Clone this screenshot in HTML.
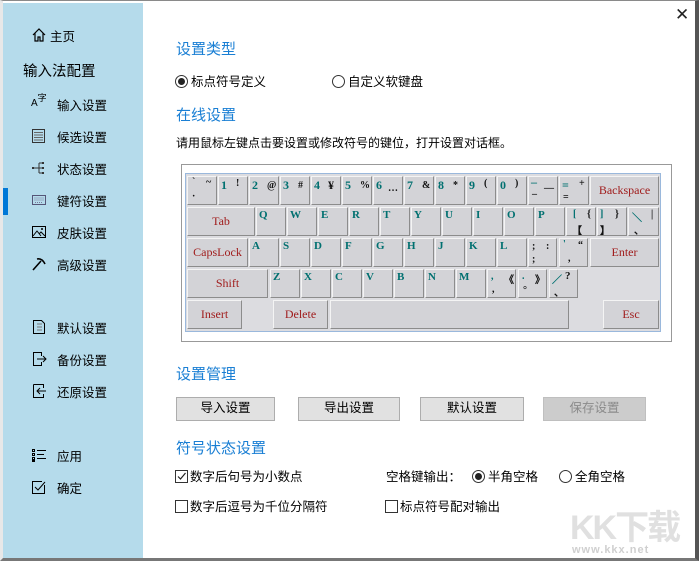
<!DOCTYPE html>
<html><head><meta charset="utf-8"><style>
*{margin:0;padding:0;box-sizing:border-box}
body{width:699px;height:561px;overflow:hidden;background:#fff;font-family:"Liberation Sans","Noto Sans CJK SC",sans-serif;font-size:12px;color:#000;position:relative}
.win{position:absolute;left:0;top:0;width:699px;height:561px;border:1px solid #8a8a8a;border-left:3px solid #e8e8e8;border-right:4px solid #555;border-bottom:3px solid #777}
.side{position:absolute;left:3px;top:3px;width:140px;height:555px;background:#b5dbeb}
.a{position:absolute;white-space:nowrap}
.si{position:absolute;left:57px;font-size:12.5px}
.ic{position:absolute;left:31px;width:16px;height:16px}
.h{position:absolute;left:176px;color:#1a7fd4;font-size:15px}
.btn{position:absolute;top:397px;height:24px;background:#e1e1e1;border:1px solid #adadad;text-align:center;line-height:21px;font-size:12.5px}
.rad{position:absolute;width:13px;height:13px;border:1px solid #333;border-radius:50%;background:#fff}
.rad.on::after{content:"";position:absolute;left:2px;top:2px;width:7px;height:7px;border-radius:50%;background:#222}
.cb{position:absolute;width:13px;height:13px;border:1px solid #333;background:#fff}
.kb{position:absolute;left:181px;top:164px;width:491px;height:178px;border:1px solid #999}
.kbi{position:absolute;left:185px;top:173px;width:476px;height:159px;border:1px solid #9ab8dc;background:#dcdce0}
.k{position:absolute;background:#d3d3d7;border:1px solid;border-color:#f4f4f4 #8c8c8c #8c8c8c #f4f4f4;font-family:"Liberation Serif",serif;font-size:10px;overflow:hidden}
.k b{position:absolute;color:#007070;font-weight:bold}
.k i{position:absolute;font-style:normal;color:#111;font-weight:bold}
.k.s{color:#a01c1c;text-align:center;font-size:12px}
</style></head><body>
<div class="win"></div>
<div class="side">
</div>
<!-- sidebar -->
<div class="ic" style="top:27px"><svg width="16" height="16"><path d="M2 8 L8 2 L14 8 M4 6 V14 H7 V10 H9 V14 H12 V6" fill="none" stroke="#000" stroke-width="1.2"/></svg></div>
<div class="si" style="left:50px;top:26px">主页</div>
<div class="a" style="left:23px;top:60px;font-size:14.5px">输入法配置</div>
<div class="ic" style="top:96px;font-size:10px;font-family:'Liberation Sans',sans-serif">A<span style="position:relative;top:-5px;font-size:9px">字</span></div>
<div class="si" style="top:95px">输入设置</div>
<div class="ic" style="top:128px"><svg width="16" height="16"><rect x="1.5" y="1.5" width="12" height="13" fill="none" stroke="#333"/><path d="M3 4.5H12M3 7H12M3 9.5H12M3 12H12" stroke="#666"/></svg></div>
<div class="si" style="top:127px">候选设置</div>
<div class="ic" style="top:160px"><svg width="16" height="16"><path d="M2 8H8M8 3V13M8 3H11M8 8H11M8 13H11" stroke="#333" fill="none"/><rect x="11" y="2" width="2" height="2" fill="#333"/><rect x="11" y="7" width="2" height="2" fill="#333"/><rect x="11" y="12" width="2" height="2" fill="#333"/><rect x="1" y="7" width="2" height="2" fill="#333"/></svg></div>
<div class="si" style="top:159px">状态设置</div>
<div class="a" style="left:3px;top:188px;width:5px;height:27px;background:#0078d7"></div>
<div class="ic" style="top:192px"><svg width="16" height="16"><rect x="1.5" y="3.5" width="13" height="9" fill="none" stroke="#557"/><path d="M3.5 6H13M3.5 8H13M4 10.5H12" stroke="#779" stroke-dasharray="1 1"/></svg></div>
<div class="si" style="top:191px">键符设置</div>
<div class="ic" style="top:224px"><svg width="16" height="16"><rect x="1.5" y="2.5" width="13" height="11" fill="none" stroke="#000"/><path d="M2 12 L6 7 L10 12 M8 10 L10 8 L14 12" fill="none" stroke="#000"/><circle cx="11" cy="5" r="1" fill="#000"/></svg></div>
<div class="si" style="top:223px">皮肤设置</div>
<div class="ic" style="top:256px"><svg width="16" height="16"><path d="M2 14 L10 5 M6 3 Q11 2 14 8" fill="none" stroke="#000" stroke-width="1.6"/></svg></div>
<div class="si" style="top:255px">高级设置</div>
<div class="ic" style="top:319px"><svg width="16" height="16"><path d="M2.5 1.5H10.5L13.5 4.5V14.5H2.5Z" fill="none" stroke="#000"/><path d="M6 5H11M6 8H11M6 11H11" stroke="#777"/></svg></div>
<div class="si" style="top:318px">默认设置</div>
<div class="ic" style="top:351px"><svg width="16" height="16"><path d="M10.5 5V1.5H2.5V14.5H10.5V11M6 8H15M12 5L15 8L12 11" fill="none" stroke="#000"/></svg></div>
<div class="si" style="top:350px">备份设置</div>
<div class="ic" style="top:383px"><svg width="16" height="16"><path d="M2.5 1.5H12.5V5M12.5 11V14.5H2.5V1.5M15 8H6M9 5L6 8L9 11" fill="none" stroke="#000"/></svg></div>
<div class="si" style="top:382px">还原设置</div>
<div class="ic" style="top:447px"><svg width="16" height="16"><path d="M1.5 2.5h2v2h-2zM1.5 6.5h2v2h-2zM1.5 10.5h2v2h-2zM1.5 13.5h2v1h-2z" fill="none" stroke="#000"/><path d="M6 3.5H15M6 7.5H13M6 11.5H15" stroke="#000"/></svg></div>
<div class="si" style="top:446px">应用</div>
<div class="ic" style="top:479px"><svg width="16" height="16"><path d="M13.5 6V14.5H1.5V2.5H11" fill="none" stroke="#000"/><path d="M4 8L7 11L14 3" fill="none" stroke="#000"/></svg></div>
<div class="si" style="top:478px">确定</div>

<div class="a" style="left:675px;top:5px;font-size:17px;color:#222">✕</div>

<div class="h" style="top:38px">设置类型</div>
<div class="rad on" style="left:175px;top:75px"></div><div class="a" style="left:191px;top:71px;font-size:12.5px">标点符号定义</div>
<div class="rad" style="left:332px;top:75px"></div><div class="a" style="left:348px;top:71px;font-size:12.5px">自定义软键盘</div>
<div class="h" style="top:104px">在线设置</div>
<div class="a" style="left:176px;top:134px;font-size:12px">请用鼠标左键点击要设置或修改符号的键位，打开设置对话框。</div>

<div class="kb"></div>
<div class="kbi"></div>
<!-- row1 -->
<div class="k" style="left:187px;top:176px;width:30px;height:29px"><i style="left:4px;top:0">`</i><i style="left:18px;top:0">~</i><i style="left:4px;top:14px">·</i></div>
<div class="k" style="left:218px;top:176px;width:30px;height:29px"><b style="left:2px;top:1px;font-size:12px">1</b><i style="left:17px;top:1px">!</i></div>
<div class="k" style="left:249px;top:176px;width:30px;height:29px"><b style="left:2px;top:1px;font-size:12px">2</b><i style="left:17px;top:3px">@</i></div>
<div class="k" style="left:280px;top:176px;width:30px;height:29px"><b style="left:2px;top:1px;font-size:12px">3</b><i style="left:17px;top:3px">#</i></div>
<div class="k" style="left:311px;top:176px;width:30px;height:29px"><b style="left:2px;top:1px;font-size:12px">4</b><i style="left:16px;top:1px;font-size:12px">¥</i></div>
<div class="k" style="left:342px;top:176px;width:30px;height:29px"><b style="left:2px;top:1px;font-size:12px">5</b><i style="left:17px;top:3px">%</i></div>
<div class="k" style="left:373px;top:176px;width:30px;height:29px"><b style="left:2px;top:1px;font-size:12px">6</b><i style="left:14px;top:6px">…</i></div>
<div class="k" style="left:404px;top:176px;width:30px;height:29px"><b style="left:2px;top:1px;font-size:12px">7</b><i style="left:17px;top:3px">&amp;</i></div>
<div class="k" style="left:435px;top:176px;width:30px;height:29px"><b style="left:2px;top:1px;font-size:12px">8</b><i style="left:17px;top:3px">*</i></div>
<div class="k" style="left:466px;top:176px;width:30px;height:29px"><b style="left:2px;top:1px;font-size:12px">9</b><i style="left:17px;top:1px">(</i></div>
<div class="k" style="left:497px;top:176px;width:30px;height:29px"><b style="left:2px;top:1px;font-size:12px">0</b><i style="left:17px;top:1px">)</i></div>
<div class="k" style="left:528px;top:176px;width:30px;height:29px"><b style="left:2px;top:-2px;font-size:12px">–</b><i style="left:15px;top:6px">—</i><i style="left:3px;top:12px">–</i></div>
<div class="k" style="left:559px;top:176px;width:30px;height:29px"><b style="left:2px;top:1px;font-size:12px">=</b><i style="left:19px;top:1px">+</i><i style="left:3px;top:15px">=</i></div>
<div class="k s" style="left:590px;top:176px;width:69px;height:29px;line-height:27px">Backspace</div>
<!-- row2 -->
<div class="k s" style="left:187px;top:207px;width:68px;height:29px;line-height:27px">Tab</div>
<div class="k" style="left:256px;top:207px;width:30px;height:29px"><b style="left:2px;top:1px;font-size:11px">Q</b></div>
<div class="k" style="left:287px;top:207px;width:30px;height:29px"><b style="left:2px;top:1px;font-size:11px">W</b></div>
<div class="k" style="left:318px;top:207px;width:30px;height:29px"><b style="left:2px;top:1px;font-size:11px">E</b></div>
<div class="k" style="left:349px;top:207px;width:30px;height:29px"><b style="left:2px;top:1px;font-size:11px">R</b></div>
<div class="k" style="left:380px;top:207px;width:30px;height:29px"><b style="left:2px;top:1px;font-size:11px">T</b></div>
<div class="k" style="left:411px;top:207px;width:30px;height:29px"><b style="left:2px;top:1px;font-size:11px">Y</b></div>
<div class="k" style="left:442px;top:207px;width:30px;height:29px"><b style="left:2px;top:1px;font-size:11px">U</b></div>
<div class="k" style="left:473px;top:207px;width:30px;height:29px"><b style="left:2px;top:1px;font-size:11px">I</b></div>
<div class="k" style="left:504px;top:207px;width:30px;height:29px"><b style="left:2px;top:1px;font-size:11px">O</b></div>
<div class="k" style="left:535px;top:207px;width:30px;height:29px"><b style="left:2px;top:1px;font-size:11px">P</b></div>
<div class="k" style="left:566px;top:207px;width:30px;height:29px"><b style="left:6px;top:1px">[</b><i style="left:20px;top:1px">{</i><i style="left:5px;top:14px">【</i></div>
<div class="k" style="left:597px;top:207px;width:30px;height:29px"><b style="left:2px;top:1px">]</b><i style="left:17px;top:1px">}</i><i style="left:2px;top:14px">】</i></div>
<div class="k" style="left:628px;top:207px;width:31px;height:29px"><b style="left:3px;top:1px">＼</b><i style="left:22px;top:1px">|</i><i style="left:5px;top:14px">、</i></div>
<!-- row3 -->
<div class="k s" style="left:187px;top:238px;width:61px;height:29px;line-height:27px">CapsLock</div>
<div class="k" style="left:249px;top:238px;width:30px;height:29px"><b style="left:2px;top:1px;font-size:11px">A</b></div>
<div class="k" style="left:280px;top:238px;width:30px;height:29px"><b style="left:2px;top:1px;font-size:11px">S</b></div>
<div class="k" style="left:311px;top:238px;width:30px;height:29px"><b style="left:2px;top:1px;font-size:11px">D</b></div>
<div class="k" style="left:342px;top:238px;width:30px;height:29px"><b style="left:2px;top:1px;font-size:11px">F</b></div>
<div class="k" style="left:373px;top:238px;width:30px;height:29px"><b style="left:2px;top:1px;font-size:11px">G</b></div>
<div class="k" style="left:404px;top:238px;width:30px;height:29px"><b style="left:2px;top:1px;font-size:11px">H</b></div>
<div class="k" style="left:435px;top:238px;width:30px;height:29px"><b style="left:2px;top:1px;font-size:11px">J</b></div>
<div class="k" style="left:466px;top:238px;width:30px;height:29px"><b style="left:2px;top:1px;font-size:11px">K</b></div>
<div class="k" style="left:497px;top:238px;width:30px;height:29px"><b style="left:2px;top:1px;font-size:11px">L</b></div>
<div class="k" style="left:528px;top:238px;width:29px;height:29px"><i style="left:3px;top:2px">;</i><i style="left:17px;top:2px">:</i><i style="left:3px;top:15px">;</i></div>
<div class="k" style="left:559px;top:238px;width:29px;height:29px"><b style="left:3px;top:0px">'</b><i style="left:18px;top:1px">“</i><i style="left:8px;top:14px">,</i></div>
<div class="k s" style="left:590px;top:238px;width:69px;height:29px;line-height:27px">Enter</div>
<!-- row4 -->
<div class="k s" style="left:187px;top:269px;width:81px;height:29px;line-height:27px">Shift</div>
<div class="k" style="left:270px;top:269px;width:30px;height:29px"><b style="left:2px;top:1px;font-size:11px">Z</b></div>
<div class="k" style="left:301px;top:269px;width:30px;height:29px"><b style="left:2px;top:1px;font-size:11px">X</b></div>
<div class="k" style="left:332px;top:269px;width:30px;height:29px"><b style="left:2px;top:1px;font-size:11px">C</b></div>
<div class="k" style="left:363px;top:269px;width:30px;height:29px"><b style="left:2px;top:1px;font-size:11px">V</b></div>
<div class="k" style="left:394px;top:269px;width:30px;height:29px"><b style="left:2px;top:1px;font-size:11px">B</b></div>
<div class="k" style="left:425px;top:269px;width:30px;height:29px"><b style="left:2px;top:1px;font-size:11px">N</b></div>
<div class="k" style="left:456px;top:269px;width:30px;height:29px"><b style="left:2px;top:1px;font-size:11px">M</b></div>
<div class="k" style="left:487px;top:269px;width:29px;height:29px"><b style="left:3px;top:1px">,</b><i style="left:16px;top:1px">《</i><i style="left:4px;top:14px">,</i></div>
<div class="k" style="left:518px;top:269px;width:29px;height:29px"><b style="left:3px;top:1px">.</b><i style="left:16px;top:1px">》</i><i style="left:4px;top:15px">°</i></div>
<div class="k" style="left:549px;top:269px;width:29px;height:29px"><b style="left:2px;top:1px">／</b><i style="left:15px;top:0px;font-size:11px">?</i><i style="left:4px;top:14px">、</i></div>
<!-- row5 -->
<div class="k s" style="left:187px;top:300px;width:55px;height:29px;line-height:27px">Insert</div>
<div class="k s" style="left:273px;top:300px;width:55px;height:29px;line-height:27px">Delete</div>
<div class="k" style="left:330px;top:300px;width:239px;height:29px"></div>
<div class="k s" style="left:603px;top:300px;width:56px;height:29px;line-height:27px">Esc</div>

<div class="h" style="top:363px">设置管理</div>
<div class="btn" style="left:176px;width:99px">导入设置</div>
<div class="btn" style="left:298px;width:102px">导出设置</div>
<div class="btn" style="left:420px;width:104px">默认设置</div>
<div class="btn" style="left:543px;width:103px;background:#cccccc;border-color:#bfbfbf;color:#8a8a8a">保存设置</div>
<div class="h" style="top:437px">符号状态设置</div>
<div class="cb" style="left:175px;top:470px"><svg width="11" height="11" style="position:absolute;left:0;top:0"><path d="M2 5.5L4.5 8L9.5 2" fill="none" stroke="#222" stroke-width="1.2"/></svg></div>
<div class="a" style="left:190px;top:466px;font-size:12.5px">数字后句号为小数点</div>
<div class="a" style="left:386px;top:466px;font-size:12.5px">空格键输出：</div>
<div class="rad on" style="left:472px;top:470px"></div><div class="a" style="left:488px;top:466px;font-size:12.5px">半角空格</div>
<div class="rad" style="left:559px;top:470px"></div><div class="a" style="left:575px;top:466px;font-size:12.5px">全角空格</div>
<div class="cb" style="left:175px;top:500px"></div>
<div class="a" style="left:190px;top:496px;font-size:12.5px">数字后逗号为千位分隔符</div>
<div class="cb" style="left:385px;top:500px"></div>
<div class="a" style="left:400px;top:496px;font-size:12.5px">标点符号配对输出</div>

<div class="a" style="left:570px;top:500px;font-size:34px;font-weight:bold;color:#e0e0e0;letter-spacing:-2px;font-family:'Liberation Sans','Noto Sans CJK SC',sans-serif">KK下载</div>
<div class="a" style="left:572px;top:544px;font-size:11px;font-weight:bold;color:#cfcfcf;letter-spacing:1px">www.kkx.net</div>
</body></html>
